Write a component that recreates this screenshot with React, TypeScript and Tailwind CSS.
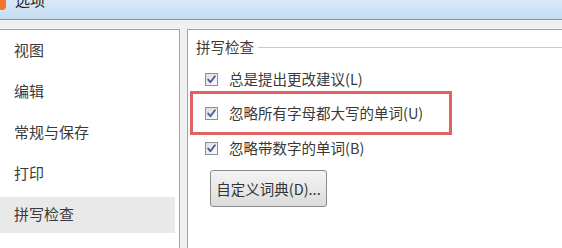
import React from "react";

const FONT = '"Microsoft YaHei", "Noto Sans CJK SC", "Noto Sans", sans-serif';

const NAV = ["视图", "编辑", "常规与保存", "打印", "拼写检查"];

function CheckBox() {
  return (
    <span className="flex h-[13px] w-[13px] shrink-0 items-center justify-center border border-[#8e8f8f] bg-gradient-to-br from-[#dcdcdc] to-[#ffffff]">
      <svg width="11" height="11" viewBox="0 0 11 11" className="block">
        <path
          d="M2.2 5.6 L4.4 8.2 L8.9 2.2"
          fill="none"
          stroke="#4c5b9e"
          strokeWidth="1.9"
          strokeLinecap="round"
          strokeLinejoin="round"
        />
      </svg>
    </span>
  );
}

function CheckRow({ label }: { label: string }) {
  return (
    <div className="flex h-[20px] items-center gap-[11px]">
      <CheckBox />
      <span className="text-[14.5px] leading-none text-[#3a3a3a]">{label}</span>
    </div>
  );
}

export default function App() {
  return (
    <div
      className="flex h-[248px] w-[562px] flex-col overflow-hidden bg-[#f0f0f0]"
      style={{ fontFamily: FONT }}
    >
      {/* barre de titre, coupée en haut */}
      <div className="flex h-[19px] shrink-0 items-start gap-[9px] overflow-hidden bg-gradient-to-b from-[#d9e9f8] to-[#c4dcf3]">
        <span className="mt-[-6px] h-[16px] w-[6px] rounded-br-[4px] bg-[#f0782a]" />
        <span className="mt-[-9px] text-[15px] leading-[18px] text-[#1a1a1a]">选项</span>
      </div>
      <div className="h-px shrink-0 bg-[#8593a2]" />
      <div className="h-[9px] shrink-0 bg-[#eef0f2]" />

      <div className="flex flex-1">
        {/* liste de gauche */}
        <div className="w-[180px] shrink-0 border-t border-r border-[#a3a3a3] bg-white">
          {NAV.map((item, i) => {
            const active = i === NAV.length - 1;
            return (
              <div key={item} className="h-[41px] py-[2.5px] pr-[4px]">
                <div
                  className={`flex h-full items-center pl-[14px] text-[15px] text-[#3a3a3a] ${
                    active ? "bg-[#e9e9e9]" : ""
                  }`}
                >
                  {item}
                </div>
              </div>
            );
          })}
        </div>

        <div className="w-[7px] shrink-0" />

        {/* panneau de droite */}
        <div className="flex flex-1 flex-col border-t border-l border-[#a3a3a3] bg-white">
          <div className="mt-[8px] flex h-[18px] items-center gap-[4px] pl-[8px]">
            <span className="text-[14.5px] leading-none text-[#3a3a3a]">拼写检查</span>
            <span className="h-px flex-1 bg-[#c9c9c9]" />
          </div>

          <div className="mt-[13px] pl-[17px]">
            <CheckRow label="总是提出更改建议(L)" />
          </div>

          <div className="ml-[2px] mt-[2px] flex h-[44px] w-[262px] items-center border-[3px] border-[#e06262] pl-[12px]">
            <CheckRow label="忽略所有字母都大写的单词(U)" />
          </div>

          <div className="mt-[3px] pl-[17px]">
            <CheckRow label="忽略带数字的单词(B)" />
          </div>

          <div className="ml-[22px] mt-[12px]">
            <button
              type="button"
              className="flex h-[37px] w-[117px] items-center justify-center rounded-[3px] border border-[#8a8a8a] bg-gradient-to-b from-[#f4f4f4] to-[#dcdcdc] text-[14.5px] text-[#333]"
            >
              自定义词典(D)...
            </button>
          </div>
        </div>
      </div>
    </div>
  );
}
